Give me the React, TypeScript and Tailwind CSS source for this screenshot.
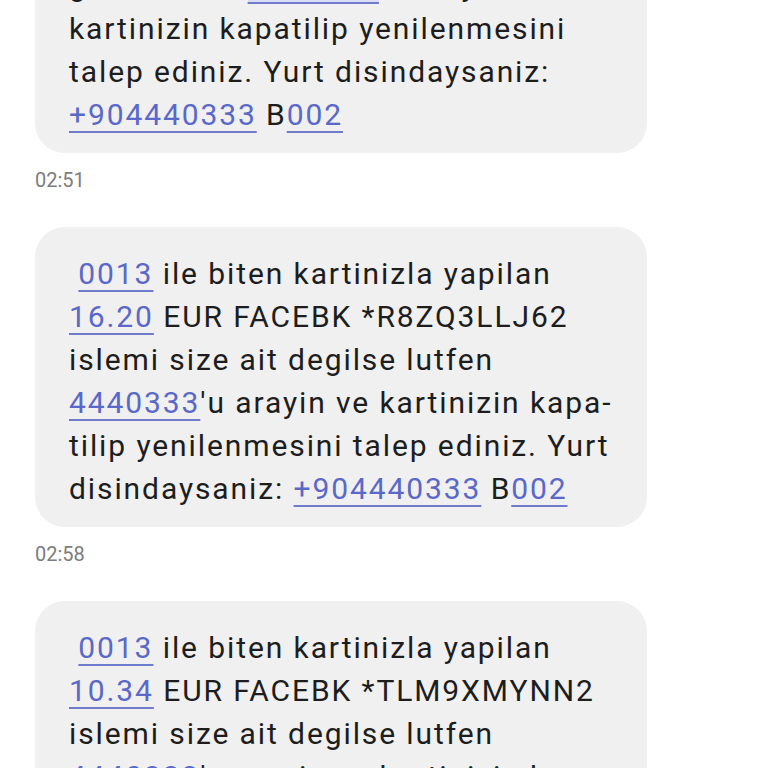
import React from "react";

type Seg = { text: string; link?: boolean; highlight?: boolean };
type Line = Seg[];

type Message = {
  id: string;
  lines: Line[];
  time?: string;
};

const t = (text: string): Seg => ({ text });
const l = (text: string, highlight = false): Seg => ({ text, link: true, highlight });

const messages: Message[] = [
  {
    id: "sms-1",
    lines: [
      [t(" "), l("0013"), t(" ile biten kartinizla yapilan")],
      [l("11.63"), t(" EUR FACEBK *QW7KMP2LT4")],
      [t("islemi size ait de-")],
      [t("gilse lutfen "), l("4440333", true), t("'u arayin ve")],
      [t("kartinizin kapatilip yenilenmesini")],
      [t("talep ediniz. Yurt disindaysaniz:")],
      [l("+904440333"), t(" B"), l("002")],
    ],
    time: "02:51",
  },
  {
    id: "sms-2",
    lines: [
      [t(" "), l("0013"), t(" ile biten kartinizla yapilan")],
      [l("16.20"), t(" EUR FACEBK *R8ZQ3LLJ62")],
      [t("islemi size ait degilse lutfen")],
      [l("4440333"), t("'u arayin ve kartinizin kapa-")],
      [t("tilip yenilenmesini talep ediniz. Yurt")],
      [t("disindaysaniz: "), l("+904440333"), t(" B"), l("002")],
    ],
    time: "02:58",
  },
  {
    id: "sms-3",
    lines: [
      [t(" "), l("0013"), t(" ile biten kartinizla yapilan")],
      [l("10.34"), t(" EUR FACEBK *TLM9XMYNN2")],
      [t("islemi size ait degilse lutfen")],
      [l("4440333"), t("'u arayin ve kartinizin kapa-")],
      [t("tilip yenilenmesini talep ediniz. Yurt")],
      [t("disindaysaniz: "), l("+904440333"), t(" B"), l("002")],
    ],
  },
];

function Bubble({ lines }: { lines: Line[] }) {
  return (
    <div className="w-[612px] rounded-[30px] bg-[#f0f0f0] pl-[34px] pt-[25px] pb-[17px] text-[30px] leading-[43px] tracking-[1.9px] text-[#1d1d1d]">
      {lines.map((line, i) => (
        <div key={i} className="whitespace-pre">
          {line.map((seg, j) =>
            seg.link ? (
              <span
                key={j}
                className={`text-[#5a68c9] underline decoration-[#6f7bcc] decoration-2 underline-offset-[6px] ${
                  seg.highlight ? "bg-[#dcdcf7]" : ""
                }`}
              >
                {seg.text}
              </span>
            ) : (
              <span key={j}>{seg.text}</span>
            )
          )}
        </div>
      ))}
    </div>
  );
}

export default function App() {
  return (
    <div
      className="h-[768px] w-[768px] overflow-hidden bg-white"
      style={{ fontFamily: "Roboto, 'Noto Sans', sans-serif" }}
    >
      <div className="-mt-[190px] flex flex-col pl-[35px]">
        {messages.map((msg) => (
          <div key={msg.id} className="flex flex-col">
            <Bubble lines={msg.lines} />
            {msg.time && (
              <div className="mt-[15px] mb-[35px] text-[20px] leading-6 text-[#7c7c7c]">
                {msg.time}
              </div>
            )}
          </div>
        ))}
      </div>
    </div>
  );
}
